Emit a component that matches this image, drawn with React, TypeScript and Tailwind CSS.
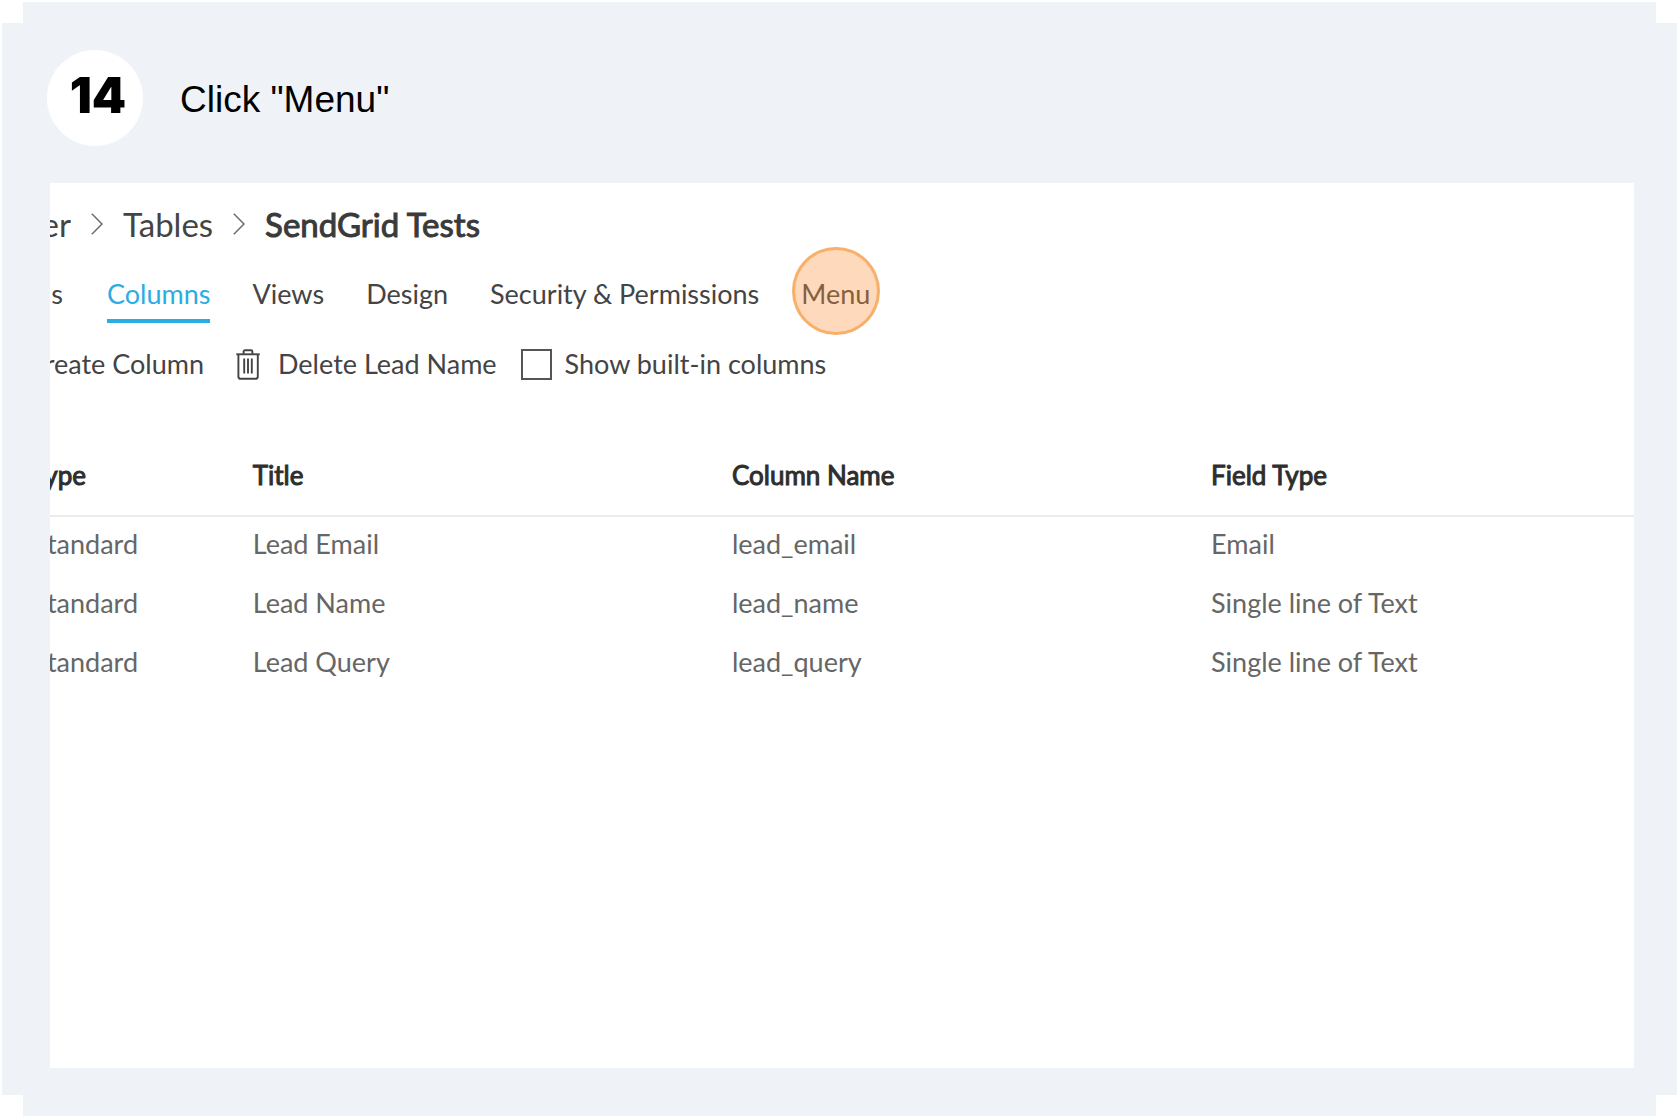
const breadcrumbs = ["er", "Tables"];
const tabs = ["Views", "Design", "Security & Permissions"];
const headings = ["ype", "Title", "Column Name", "Field Type"];
const rows = [
  ["tandard", "Lead Email", "lead_email", "Email"],
  ["tandard", "Lead Name", "lead_name", "Single line of Text"],
  ["tandard", "Lead Query", "lead_query", "Single line of Text"],
];

function Chevron() {
  return (
    <svg width="12" height="22" viewBox="0 0 12 22" fill="none" stroke="#6b6b6b" strokeWidth="1.5" aria-hidden="true">
      <path d="M0.8 0.8 11 11 0.8 21.2" />
    </svg>
  );
}

function TrashIcon() {
  return (
    <svg width="24" height="31" viewBox="0 0 24 31" fill="none" stroke="#444" strokeWidth="1.9" aria-hidden="true">
      <path d="M0.3 5.3H23.7" />
      <path d="M7.6 5V2.6Q7.6 1.2 9 1.2H15Q16.4 1.2 16.4 2.6V5" />
      <path d="M2.4 5.5V27.4Q2.4 29.8 4.8 29.8H19.4Q21.8 29.8 21.8 27.4V5.5" />
      <path d="M8.2 9.6V24.6M12 9.6V24.6M15.8 9.6V24.6" />
    </svg>
  );
}

export default function App() {
  return (
    <div className="flex min-h-screen flex-col bg-white pt-[2px] pr-[3px] pb-1 pl-[2px]">
      <main className="relative flex flex-1 flex-col bg-[#eff3f8] pr-[43px] pb-12 pl-12">
        <span className="absolute top-0 left-0 size-[21px] bg-white" />
        <span className="absolute top-0 right-0 size-[21px] bg-white" />
        <span className="absolute bottom-0 left-0 size-[21px] bg-white" />
        <span className="absolute right-0 bottom-0 size-[21px] bg-white" />

        <header className="-ml-[3px] flex items-center gap-[37px] pt-12 pb-[37px]">
          <div className="flex size-24 items-center justify-center rounded-full bg-white pb-1.5 pl-1.5 font-[Inter] text-[49px] leading-none font-black text-black [font-kerning:none]">
            14
          </div>
          <h1 className="pt-1 font-['Liberation_Sans',sans-serif] text-[37px] leading-[42px] text-black">Click "Menu"</h1>
        </header>

        <section className="flex-1 overflow-hidden bg-white pt-[21px] font-[Lato,sans-serif] text-[27px] leading-8 text-[#444]">
          <nav aria-label="Breadcrumb" className="flex h-10 items-center gap-5 text-[33px] leading-10">
            {breadcrumbs.map((crumb, i) => (
              <span key={crumb} className="flex items-center gap-5">
                <a href="#" className={i === 0 ? "flex w-[21px] justify-end overflow-hidden" : ""}>
                  {crumb}
                </a>
                <Chevron />
              </span>
            ))}
            <span className="text-[#3a3a3a] [-webkit-text-stroke:1px_#3a3a3a]">SendGrid Tests</span>
          </nav>

          <div className="mt-[34px] flex items-start gap-[42px] whitespace-nowrap">
            <button className="flex w-[15px] justify-end pr-[2px]">s</button>
            <button className="border-b-4 border-[#2bace2] pb-[9px] text-[#2bace2]">Columns</button>
            {tabs.map((tab) => (
              <button key={tab}>{tab}</button>
            ))}
            <button className="relative">
              Menu
              <span className="absolute top-1/2 left-1/2 size-[88px] -translate-x-1/2 -translate-y-[47px] rounded-full border-[3px] border-[#f8a556]/80 bg-[#fb923c]/35" />
            </button>
          </div>

          <div className="mt-[25px] flex h-8 items-center whitespace-nowrap">
            <button className="flex w-[154px] justify-end overflow-hidden">reate Column</button>
            <button className="ml-8 flex items-center gap-[18px]">
              <TrashIcon />
              Delete Lead Name
            </button>
            <label className="ml-6 flex items-center gap-[13px]">
              <input type="checkbox" className="size-[31px] appearance-none border-2 border-[#555] bg-white" />
              Show built-in columns
            </label>
          </div>

          <table className="mt-[60px] w-full table-fixed text-left">
            <thead>
              <tr className="border-b-2 border-[#ececec] text-[26px] text-[#2e2e2e] [-webkit-text-stroke:1px_#2e2e2e]">
                {headings.map((heading, i) => (
                  <th
                    key={heading}
                    className={
                      i === 0
                        ? "w-[12.8%] pt-[19px] pb-6 font-normal"
                        : i === 3
                          ? "w-[26.7%] pt-[19px] pb-6 font-normal"
                          : "pt-[19px] pb-6 font-normal"
                    }
                  >
                    <span className={i === 0 ? "flex w-9 justify-end overflow-hidden" : ""}>{heading}</span>
                  </th>
                ))}
              </tr>
            </thead>
            <tbody className="text-[#666]">
              {rows.map((row) => (
                <tr key={row[1]}>
                  {row.map((cell, i) => (
                    <td key={i} className="pt-[11px] pb-4">
                      <span className={i === 0 ? "flex w-[88px] justify-end overflow-hidden" : ""}>{cell}</span>
                    </td>
                  ))}
                </tr>
              ))}
            </tbody>
          </table>
        </section>
      </main>
    </div>
  );
}
